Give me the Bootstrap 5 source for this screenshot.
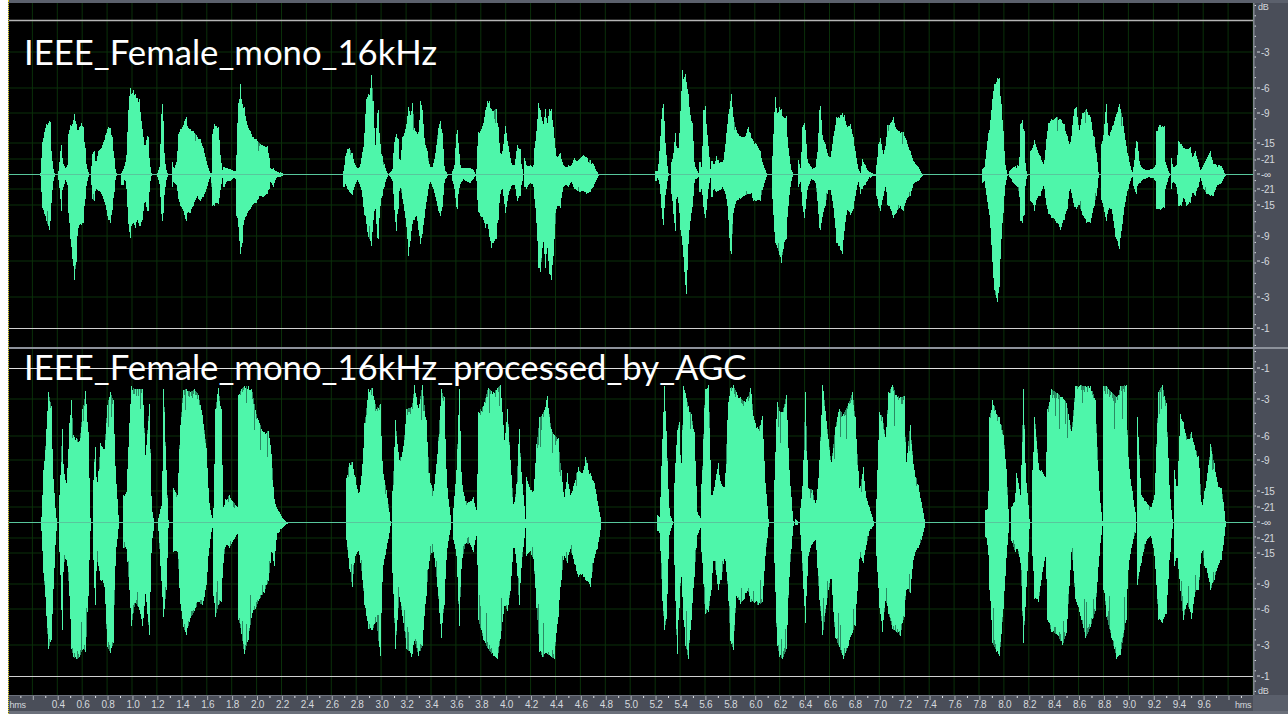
<!DOCTYPE html>
<html lang="en">
<head>
  <meta charset="UTF-8" />
  <meta name="viewport" content="width=device-width, initial-scale=1.0"/>
  <title>IEEE_Female_mono_16kHz</title>
  <link href="https://cdn.jsdelivr.net/npm/bootstrap@5.3.0/dist/css/bootstrap.min.css" rel="stylesheet"/>
  <style>
    html, body { height: 714px; overflow: hidden; background: #fff; }
    .side-edge { width: 8px; background: #fff; }
    .editor { border-left: 1px dotted #e8d820; background: #4a4e59; min-width: 0; }
    .top-strip { height: 3px; background: #5b606c; }
    .track-one { height: 344px; }
    .track-two { height: 346px; }
    .divider { height: 2px; background: #8d929b; }
    .plot-wrap { width: 1244px; background: #000; }
    .plot-wrap svg, .db-scale svg, .time-scale svg { display: block; }
    .db-scale svg { overflow: visible; }
    .db-scale { width: 35px; background: #4a4e59; }
    .track-title { left: 15px; color: #fff; font-family: "Lato", "Liberation Sans", sans-serif; font-size: 34.7px; line-height: 40px; letter-spacing: 0; white-space: nowrap; }
    .track-one .track-title { top: 29px; }
    .track-two .track-title { top: -2px; }
    .time-row { height: 16px; }
    .time-scale { width: 1244px; background: #4a4e59; }
    .time-corner { width: 35px; background: #5a5f6b; }
    .bottom-strip { height: 3px; background: #6b707b; }
    .scale-text { font-family: "Liberation Sans", Arial, sans-serif; font-size: 10px; letter-spacing: -0.3px; fill: #d5d9de; }
    .unit-text { font-size: 9px; letter-spacing: -0.2px; }
  </style>
</head>
<body class="m-0">

  <div class="d-flex">
    <div class="side-edge flex-shrink-0"></div>
    <div class="editor d-flex flex-column flex-grow-1">
      <div class="top-strip"></div>

      <!-- Track 1 -->
      <div class="track-one d-flex">
        <div class="plot-wrap position-relative">
          <svg id="plot1" width="1244" height="344" viewBox="9 3 1244 344"></svg>
          <div class="track-title position-absolute">IEEE_Female_mono_16kHz</div>
        </div>
        <div class="db-scale"><svg id="scale1" width="35" height="344" viewBox="1253 3 35 344"></svg></div>
      </div>

      <div class="divider"></div>

      <!-- Track 2 -->
      <div class="track-two d-flex">
        <div class="plot-wrap position-relative">
          <svg id="plot2" width="1244" height="346" viewBox="9 349 1244 346"></svg>
          <div class="track-title position-absolute">IEEE_Female_mono_16kHz_processed_by_AGC</div>
        </div>
        <div class="db-scale"><svg id="scale2" width="35" height="346" viewBox="1253 349 35 346"></svg></div>
      </div>

      <!-- Time ruler -->
      <div class="time-row d-flex">
        <div class="time-scale"><svg id="timeRuler" width="1244" height="16" viewBox="9 695 1244 16"></svg></div>
        <div class="time-corner"></div>
      </div>
      <div class="bottom-strip"></div>
    </div>
  </div>

  <script src="https://cdn.jsdelivr.net/npm/bootstrap@5.3.0/dist/js/bootstrap.bundle.min.js"></script>
  <script>
    // envelopes are [x, top, bottom] read off zoomed crops of the picture
    const top1 = [
      [[30,312,312],[33,305,320],[36,232,400],[42,200,420],[50,170,445],[57,160,470],[60,165,445],[64,250,390],[70,300,330],[74,310,316]],
      [[84,312,314],[87,300,340],[90,260,358],[94,232,415],[96,270,355],[100,285,345],[108,298,330],[113,290,340],[116,200,420],[122,172,500],[128,170,560],[134,140,625],[138,170,570],[142,190,490],[148,180,455],[155,168,455],[160,180,450],[165,240,380],[170,290,340],[176,310,316]],
      [[183,312,315],[187,260,380],[192,250,385],[198,285,350],[205,250,355],[215,240,365],[226,205,395],[234,178,440],[240,182,450],[248,210,410],[252,270,360],[258,310,316]],
      [[275,310,340],[280,300,340],[285,288,320],[290,260,350],[294,150,440],[300,60,495],[304,80,460],[310,65,450],[316,80,465],[322,90,440],[328,95,460],[332,140,460],[338,190,440],[345,240,380],[352,205,415],[355,210,415],[358,270,360],[364,310,316]],
      [[380,312,314],[385,305,325],[390,290,345],[393,170,400],[396,110,445],[400,160,420],[404,270,360],[410,305,325],[414,312,314]],
      [[428,280,345],[432,300,335],[440,280,340],[446,200,380],[452,185,400],[462,165,420],[468,150,445],[472,175,420],[480,185,420],[490,190,400],[500,205,375],[510,215,385],[520,240,375],[530,280,350],[540,310,320]],
      [[546,310,345],[548,200,400],[552,170,400],[558,175,390],[566,180,395],[572,270,350],[578,305,320]],
      [[582,295,345],[590,297,330],[600,300,330],[612,305,322],[618,305,325]],
      [[620,260,430],[624,110,440],[628,100,500],[632,46,545],[636,110,510],[642,120,440],[650,165,430],[660,190,410],[670,210,395],[680,215,390],[690,230,370],[700,235,375],[712,235,365],[718,270,350],[722,300,330],[730,298,345],[738,305,322],[750,308,318],[764,312,314]]
    ];
    const top2 = [
      [[42,305,345],[46,265,335],[52,245,350],[58,240,360],[66,255,368],[74,285,345],[82,298,325],[90,295,340],[96,260,360],[102,230,420],[108,100,440],[114,80,490],[120,75,500],[125,20,520],[130,100,440],[136,240,400],[142,140,495],[146,128,500],[150,230,400],[156,265,370],[162,285,345],[172,310,318]],
      [[180,310,316],[188,300,330],[192,230,390],[198,200,475],[204,215,410],[210,290,340],[218,210,380],[226,190,430],[232,150,490],[236,120,550],[242,145,500],[248,105,450],[254,190,440],[260,195,430],[266,195,470],[272,100,515],[278,130,480],[284,220,430],[292,250,370],[300,295,330],[308,295,345],[316,260,370],[324,190,410],[330,160,430],[338,200,400],[344,300,330],[352,312,316]],
      [[368,305,330],[374,290,350],[378,210,395],[381,188,410],[386,230,360],[392,295,335],[400,298,325],[410,298,330],[420,297,335],[430,302,325],[436,312,316]],
      [[440,300,330],[444,195,415],[452,190,430],[460,170,440],[466,130,465],[472,100,450],[478,100,490],[484,125,525],[490,130,510],[498,125,500],[504,180,440],[512,260,360],[518,250,350],[526,175,420],[530,200,400],[536,240,365],[546,290,340],[554,290,340],[562,232,385],[570,245,370],[576,300,330]],
      [[584,270,345],[590,290,350],[600,290,335],[610,295,340],[614,240,380],[620,190,450],[626,105,590],[632,130,600],[640,175,500],[646,125,590],[652,170,520],[658,125,605],[664,125,625],[670,180,550],[680,270,400],[690,255,405],[700,290,345],[710,295,340],[716,290,345],[724,290,330],[732,270,350],[740,280,355],[750,270,360],[760,262,355],[770,268,365],[780,275,360],[790,285,345],[800,305,325],[806,312,316]]
    ];
    const top3 = [
      [[48,305,330],[54,305,320],[60,230,345],[66,130,430],[70,108,455],[74,170,400],[78,260,350],[85,310,316]],
      [[96,280,365],[100,260,420],[106,197,475],[110,240,365],[116,240,390],[122,130,470],[127,5,510],[132,30,580],[136,15,640],[140,45,670],[146,80,500],[152,150,440],[158,170,400],[164,290,330],[175,310,318]],
      [[180,280,360],[186,300,350],[190,130,400],[195,117,435],[200,175,410],[206,240,345],[212,305,320]],
      [[216,278,375],[222,290,350],[230,265,360],[240,280,355],[250,280,350],[258,215,370],[264,150,410],[270,110,530],[275,80,545],[280,150,420],[290,190,385],[300,205,380],[314,210,370],[325,178,365],[332,200,365],[340,222,385],[350,230,385],[360,250,385],[370,290,345],[380,310,318]],
      [[398,265,380],[402,160,460],[406,88,510],[412,140,525],[418,120,545],[424,125,572],[430,150,530],[438,145,500],[445,240,400],[452,290,340],[458,310,316]],
      [[476,275,345],[482,300,330],[488,180,400],[492,167,435],[497,190,405],[503,280,350],[514,295,325],[526,298,330],[534,240,400],[538,130,465],[542,117,470],[548,210,430],[556,230,400],[565,265,355],[572,268,355],[580,210,400],[590,150,510],[600,145,530],[606,138,545],[614,145,470],[622,180,410],[632,170,425],[640,210,410],[646,250,370],[655,300,330],[662,310,365],[666,272,350],[675,290,340],[685,305,325],[695,310,318],[706,312,316]],
      [[710,290,370],[716,230,400],[722,212,415],[730,260,370],[738,230,340],[742,175,395],[750,170,405],[760,150,435],[768,185,420],[778,190,405],[790,195,415],[800,220,380],[810,250,370],[822,280,335],[835,295,330],[847,312,316]]
    ];
    const top4 = [
      [[68,300,335],[74,295,330],[84,205,400],[90,175,440],[96,110,545],[102,50,650],[108,45,680],[113,30,695],[118,30,650],[124,110,500],[130,190,420],[136,290,340],[142,312,316]],
      [[150,305,320],[160,295,335],[172,290,345],[178,280,365],[182,170,445],[187,158,450],[192,190,425],[197,295,335],[202,312,316]],
      [[212,250,385],[218,240,390],[224,218,415],[230,240,380],[240,265,370],[252,290,340],[258,230,390],[264,170,420],[275,155,435],[290,148,450],[302,155,470],[312,170,440],[322,205,410],[330,235,345],[336,190,370],[342,125,400],[350,120,410],[358,190,395],[366,140,425],[380,125,450],[392,150,450],[402,210,400],[410,260,370],[416,312,316]],
      [[426,230,385],[432,190,410],[438,110,445],[446,210,410],[456,180,410],[466,150,490],[478,110,530],[488,150,450],[494,200,400],[504,265,350],[516,308,318]],
      [[522,295,345],[528,220,365],[533,225,340],[540,290,335],[550,300,325],[565,302,320],[580,298,322],[587,290,330],[590,190,410],[600,172,412],[612,175,405],[616,280,350],[628,310,316]],
      [[634,270,350],[640,295,330],[650,290,345],[656,220,400],[664,230,400],[672,240,375],[680,245,400],[690,238,390],[698,270,360],[705,250,370],[715,280,345],[722,305,320],[730,290,350],[740,272,365],[750,250,370],[760,285,370],[770,288,345],[785,292,335],[795,312,316]]
    ];
    const bottom1 = [
      [[30,420,440],[36,300,550],[42,200,660],[48,40,800],[56,90,770],[60,300,640],[68,420,440]],
      [[78,370,490],[84,170,735],[88,295,520],[96,340,510],[104,150,620],[108,70,800],[114,195,830],[122,200,838],[130,210,830],[138,100,800],[146,35,810],[152,180,620],[158,420,440]],
      [[165,350,480],[170,230,650],[175,350,510],[185,215,570],[195,235,590],[202,90,790],[210,40,815],[218,70,780],[224,310,500],[232,425,430]],
      [[245,370,480],[252,365,480],[260,150,600],[265,20,720],[275,30,640],[285,28,660],[295,30,720],[302,260,610],[312,85,750],[318,400,470],[324,425,432]],
      [[336,420,440],[345,390,600],[350,30,690],[356,300,600],[362,425,432]],
      [[375,350,490],[386,370,490],[392,180,630],[400,35,720],[408,30,750],[420,40,690],[430,30,670],[440,50,640],[452,130,650],[462,240,580],[468,390,480],[476,420,435]],
      [[480,400,620],[485,100,690],[492,25,650],[500,100,640],[505,400,520],[512,380,470],[520,370,480],[530,385,465],[544,400,445]],
      [[546,50,700],[552,30,740],[560,20,820],[570,20,770],[580,30,680],[590,110,660],[600,150,630],[612,180,610],[624,175,570],[632,260,480],[638,380,530],[645,400,450],[660,420,435],[672,427,428]],
      [[826,330,450],[834,280,530],[842,275,590],[850,320,500],[860,370,490],[868,300,560],[875,150,650],[885,30,730],[895,25,735],[905,100,700],[915,85,825],[922,300,540],[932,360,480],[942,425,432]],
      [[948,360,550],[955,140,800],[965,270,620],[975,240,700],[985,100,800],[998,95,830],[1005,15,770],[1015,100,825],[1025,15,790],[1035,140,620],[1045,330,500],[1055,360,490],[1065,250,590],[1075,30,760],[1082,60,650],[1090,350,480],[1100,425,432]],
      [[1107,400,460],[1115,300,500],[1122,30,720],[1128,330,520],[1138,385,470],[1150,385,470],[1158,375,490],[1168,410,445],[1172,110,700],[1185,90,770],[1197,25,800],[1210,40,825],[1222,25,835],[1230,15,760],[1240,210,650],[1248,100,670],[1256,280,600],[1264,400,470],[1272,340,520],[1278,170,650],[1285,320,520],[1295,425,432]],
      [[1298,320,500],[1306,350,490],[1316,360,510],[1324,220,660],[1332,130,810],[1340,120,830],[1352,55,820],[1362,170,830],[1370,190,835],[1380,200,690],[1388,300,570],[1396,380,500],[1404,310,520],[1412,370,480],[1422,340,520],[1432,290,560],[1445,310,560],[1452,260,570],[1464,310,590],[1476,340,500],[1484,390,480],[1492,425,432]]
    ];
    const bottom2 = [
      [[46,415,440],[52,420,445],[58,230,620],[64,20,735],[70,200,690],[76,400,450],[84,425,430]],
      [[90,340,520],[97,180,820],[102,145,660],[108,300,550],[114,20,700],[120,50,790],[126,90,835],[134,120,700],[142,180,560],[150,410,450],[158,420,435]],
      [[162,340,490],[170,30,680],[180,15,670],[186,370,600],[193,360,500],[204,280,600],[212,340,570],[222,350,500],[230,90,600],[236,25,770],[244,15,805],[252,40,620],[262,60,645],[272,75,630],[282,60,600],[290,25,640],[298,140,640],[310,170,650],[320,125,640],[328,340,500],[336,425,432]],
      [[352,330,520],[358,75,780],[365,110,830],[373,110,835],[383,50,800],[390,300,560],[400,425,432]],
      [[406,422,430],[412,425,430]],
      [[420,400,450],[426,330,570],[432,40,710],[440,350,500],[450,355,470],[460,395,460],[468,300,620],[478,15,750],[488,150,640],[500,280,560],[510,170,760],[520,100,790],[532,120,835],[545,80,790],[556,40,740],[562,130,720],[574,360,500],[584,290,520],[590,370,480],[600,400,440],[610,425,432]],
      [[618,380,500],[626,110,660],[634,130,740],[642,200,630],[650,40,680],[660,15,730],[670,50,740],[680,60,755],[690,55,690],[696,280,600],[706,155,610],[716,300,500],[728,345,480],[736,390,460],[744,425,432]],
      [[902,405,450],[910,400,480],[914,130,600],[922,70,780],[932,120,810],[940,130,825],[950,190,660],[958,300,500],[964,425,432]],
      [[970,400,460],[980,380,490],[985,310,480],[995,375,520],[1002,30,780],[1008,310,640],[1018,425,432]],
      [[1026,300,500],[1032,130,630],[1042,290,640],[1050,300,560],[1060,320,500],[1066,100,700],[1075,30,740],[1090,45,750],[1105,60,785],[1115,80,740],[1128,180,480],[1138,20,630],[1150,15,680],[1165,20,760],[1178,20,720],[1190,70,670],[1200,360,500],[1208,425,432]],
      [[1212,20,600],[1220,20,690],[1232,40,760],[1246,60,835],[1256,20,820],[1270,15,700],[1276,260,540],[1286,360,470],[1294,410,445]],
      [[1300,130,585],[1310,370,520],[1322,385,465],[1335,400,450],[1345,370,500],[1355,40,700],[1365,15,710],[1375,80,680],[1385,380,490],[1392,425,432]],
      [[1396,300,530],[1404,360,500],[1412,120,600],[1420,145,700],[1430,205,640],[1442,180,695],[1450,230,610],[1460,260,600],[1468,400,480],[1476,360,530],[1485,290,560],[1492,220,600],[1500,280,570],[1510,340,530],[1520,350,510],[1530,425,432]]
    ];

    const NS = "http://www.w3.org/2000/svg";
    function add(svg, tag, attrs, text) {
      const el = document.createElementNS(NS, tag);
      for (const k in attrs) el.setAttribute(k, attrs[k]);
      if (text) el.textContent = text;
      svg.appendChild(el);
      return el;
    }

    let seed = 7;
    function rnd() {
      seed = (seed * 1103515245 + 12345) & 0x7fffffff;
      return seed / 0x7fffffff;
    }

    // one 1px column per screen x. fat > 0 swells the envelope, since straight lines
    // between read-off points come out thinner than the real thing
    function wavePath(blocks, ox, oy, sx, cy, opt) {
      let d = "", dim = "";
      const swell = a => opt.max * Math.pow(Math.max(a, 0) / opt.max, opt.fat);
      blocks.forEach(b => {
        const pts = b.map(p => [ox + p[0] / sx, oy + p[1] / 3, oy + p[2] / 3]);
        for (let x = Math.ceil(pts[0][0]) - 1; x <= pts[pts.length - 1][0]; x++) {
          let i = 0;
          while (i < pts.length - 2 && pts[i + 1][0] < x + 0.5) i++;
          const a = pts[i], c = pts[i + 1];
          const t = Math.max(0, Math.min(1, (x + 0.5 - a[0]) / (c[0] - a[0])));
          let up = a[1] + (c[1] - a[1]) * t;
          let dn = a[2] + (c[2] - a[2]) * t;
          // a read-off peak inside this column wins, so the tips keep their height
          let hit = false;
          pts.forEach(p => {
            if (p[0] >= x && p[0] < x + 1) { up = Math.min(up, p[1]); dn = Math.max(dn, p[2]); hit = true; }
          });
          let ua = swell(cy - up), da = swell(dn - cy);
          const fullU = ua, fullD = da;
          if (!hit) {
            ua *= 1 - rnd() * opt.rough;
            da *= 1 - rnd() * opt.rough;
            if (rnd() < opt.spike) ua *= 0.72 + rnd() * 0.2;
            if (rnd() < opt.spike) da *= 0.72 + rnd() * 0.2;
          }
          d += "M" + (x + 0.5) + " " + (cy - ua).toFixed(1) + "V" + (cy + da).toFixed(1);
          if (fullU - ua > 3) dim += "M" + (x + 0.5) + " " + (cy - fullU).toFixed(1) + "V" + (cy - ua).toFixed(1);
          if (fullD - da > 3) dim += "M" + (x + 0.5) + " " + (cy + da).toFixed(1) + "V" + (cy + fullD).toFixed(1);
        }
      });
      return { d: d, dim: dim };
    }

    function drawTrack(id, lines, limits, cy, waves) {
      const svg = document.getElementById(id);
      let grid = "";
      for (let x = 32.4; x < 1253; x += 24.91) grid += "M" + x.toFixed(1) + " 0V714";
      lines.forEach(y => { grid += "M9 " + y + "H1253"; });
      add(svg, "path", { d: grid, stroke: "#0a300a", "stroke-width": 1, fill: "none" });
      waves.forEach(w => {
        add(svg, "path", { d: w.dim, stroke: "#2a8a62", "stroke-width": 1, fill: "none", "shape-rendering": "crispEdges" });
        add(svg, "path", { d: w.d, stroke: "#4ef6aa", "stroke-width": 1, fill: "none", "shape-rendering": "crispEdges" });
      });
      add(svg, "path", { d: "M9 " + cy + "H1253", stroke: "#58c69c", "stroke-width": 1, fill: "none" });
      limits.forEach(l => add(svg, "path", { d: "M9 " + l[0] + "H1256", stroke: l[1], "stroke-width": l[2], fill: "none" }));
    }

    function drawScale(id, marks, y0, y1) {
      const svg = document.getElementById(id);
      add(svg, "rect", { x: 1253, y: y0, width: 1.6, height: y1 - y0, fill: "#7f848d" });
      for (let y = y0 + 2; y < y1; y += 10.3) add(svg, "rect", { x: 1254.6, y: y, width: 1.4, height: 1, fill: "#d8dbe0" });
      marks.forEach(m => {
        add(svg, "rect", { x: 1257, y: m[0] - 0.5, width: 3, height: 1, fill: "#d8dbe0" });
        add(svg, "text", { x: 1261, y: m[0] + 4, class: "scale-text" }, m[1]);
      });
    }

    const topOpt = { max: 125, fat: 0.94, rough: 0.04, spike: 0.05 };
    const botOpt = { max: 137, fat: 0.82, rough: 0.06, spike: 0.14 };
    drawTrack("plot1", [52, 88, 113, 143, 159, 189, 205, 236, 261, 297], [[20.5, "#b5b5b5", 1.5], [328.5, "#d0d0d0", 1]], 174.5, [
      wavePath(top1, 30, 70, 3, 174, topOpt),
      wavePath(top2, 330, 70, 3, 174, topOpt),
      wavePath(top3, 640, 70, 3, 174, topOpt),
      wavePath(top4, 960, 70, 3, 174, topOpt)
    ]);
    drawTrack("plot2", [399, 436, 460, 491, 507, 538, 553, 584, 609, 645], [[368.5, "#e0e0e0", 1], [676.5, "#d0d0d0", 1]], 522.5, [
      wavePath(bottom1, 30, 380, 2.613, 522, botOpt),
      wavePath(bottom2, 640, 380, 2.613, 522, botOpt)
    ]);

    drawScale("scale1", [[52,"-3"],[88,"-6"],[113,"-9"],[143,"-15"],[159,"-21"],[174,"-∞"],[189,"-21"],[205,"-15"],[236,"-9"],[261,"-6"],[297,"-3"],[328,"-1"]], 3, 347);
    add(document.getElementById("scale1"), "text", { x: 1258, y: 9.5, class: "scale-text unit-text" }, "dB");
    drawScale("scale2", [[368,"-1"],[399,"-3"],[436,"-6"],[460,"-9"],[491,"-15"],[507,"-21"],[522,"-∞"],[538,"-21"],[553,"-15"],[584,"-9"],[609,"-6"],[645,"-3"],[676,"-1"]], 349, 695);
    add(document.getElementById("scale2"), "text", { x: 1258, y: 694, class: "scale-text unit-text" }, "dB");

    // time ruler, label every 0.2 s from 0.4
    const ruler = document.getElementById("timeRuler");
    add(ruler, "rect", { x: 9, y: 695, width: 1244, height: 1, fill: "#6c717c" });
    for (let n = 1; n <= 99; n++) {
      const x = 7.9 + n * 12.455;
      const major = n % 2 === 0;
      add(ruler, "rect", { x: x, y: 696, width: 1, height: major ? 4 : 2, fill: major ? "#aeb2b8" : "#e0e2e6" });
      if (major && n >= 4 && n <= 96) {
        add(ruler, "text", { x: x + 0.5, y: 708, "text-anchor": "middle", class: "scale-text" }, (n / 10).toFixed(1));
      }
    }
    add(ruler, "text", { x: 9.5, y: 708, class: "scale-text unit-text" }, "hms");
    add(ruler, "text", { x: 1235, y: 708, class: "scale-text unit-text" }, "hms");
  </script>

</body>
</html>
